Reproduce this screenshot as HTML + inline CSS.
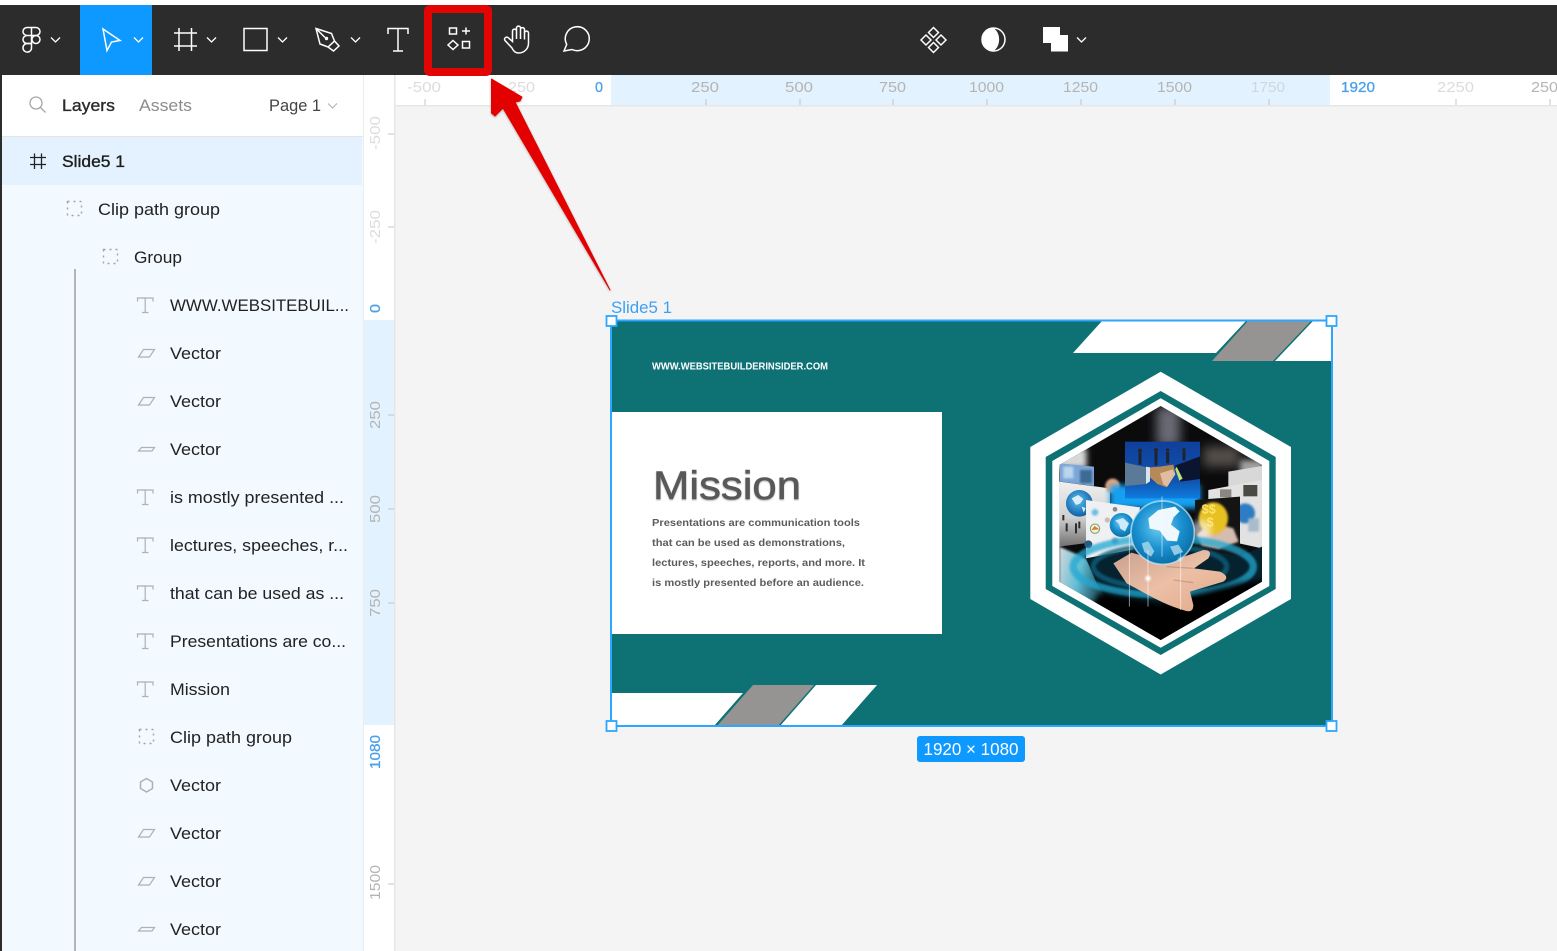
<!DOCTYPE html>
<html lang="en">
<head>
<meta charset="utf-8">
<title>Slide5 1</title>
<style>
html,body{margin:0;padding:0;background:#f4f4f4;width:1557px;height:951px;overflow:hidden}
svg{display:block}
text{font-family:"Liberation Sans",sans-serif}
.l{font-size:16.5px;fill:#222}
.r{font-size:14.5px;fill:#b4b4b4}
.rl{font-size:14.5px;fill:#dcdcdc}
.rb{font-size:14.5px;fill:#4aa0ea;stroke:#4aa0ea;stroke-width:.3}
.ic{fill:none;stroke:#fff;stroke-width:1.5}
.sic{fill:none;stroke:#b0b0b0;stroke-width:1.2}
.dash{fill:none;stroke:#a2a2a2;stroke-width:1.4;stroke-dasharray:2 4}
</style>
</head>
<body>
<svg width="1557" height="951" viewBox="0 0 1557 951" xmlns="http://www.w3.org/2000/svg">
<defs>
<clipPath id="hx"><polygon points="482,168 786,345 786,695 482,870 178,695 178,345"/></clipPath>
<radialGradient id="globe" cx="45%" cy="40%" r="60%"><stop offset="0" stop-color="#6fd0f2"/><stop offset=".6" stop-color="#1a8fd0"/><stop offset="1" stop-color="#0b6fa6"/></radialGradient>
<radialGradient id="globe2" cx="45%" cy="40%" r="60%"><stop offset="0" stop-color="#5cc0ee"/><stop offset="1" stop-color="#0f5fa8"/></radialGradient>
<linearGradient id="hand" x1="0" y1="0" x2="1" y2="1"><stop offset="0" stop-color="#c89e8e"/><stop offset=".5" stop-color="#ecc0a6"/><stop offset="1" stop-color="#e0a888"/></linearGradient>
<linearGradient id="shake" x1="0" y1="0" x2="0" y2="1"><stop offset="0" stop-color="#0f3f9a"/><stop offset=".7" stop-color="#1253b0"/><stop offset="1" stop-color="#0e7ee0"/></linearGradient>
<linearGradient id="lpanel" x1="0" y1="0" x2="0" y2="1"><stop offset="0" stop-color="#f0f0f0"/><stop offset=".55" stop-color="#d0d0d0"/><stop offset="1" stop-color="#707070"/></linearGradient>
<linearGradient id="leftbot" x1="0" y1="0" x2="1" y2=".3"><stop offset="0" stop-color="#d6dadc"/><stop offset=".45" stop-color="#5fbcd4"/><stop offset="1" stop-color="#06222c"/></linearGradient>
<filter id="b2" x="-30%" y="-30%" width="160%" height="160%"><feGaussianBlur stdDeviation="3"/></filter>
<filter id="b8" x="-40%" y="-40%" width="180%" height="180%"><feGaussianBlur stdDeviation="9"/></filter>
<filter id="b16" x="-40%" y="-40%" width="180%" height="180%"><feGaussianBlur stdDeviation="16"/></filter>
<filter id="sh" x="-20%" y="-20%" width="140%" height="140%"><feDropShadow dx="0" dy="1" stdDeviation="1" flood-color="#000" flood-opacity=".3"/></filter>
<filter id="ts" x="-5%" y="-10%" width="110%" height="130%"><feDropShadow dx="0" dy="1" stdDeviation=".8" flood-color="#000" flood-opacity=".3"/></filter>
</defs>

<!-- base -->
<rect width="1557" height="951" fill="#f4f4f4"/>
<rect width="1557" height="5" fill="#fff"/>

<!-- left panel -->
<rect x="0" y="75" width="2" height="876" fill="#2c2c2c"/>
<rect x="2" y="75" width="361" height="876" fill="#f2f9ff"/>
<rect x="2" y="75" width="361" height="61" fill="#fff"/>
<rect x="2" y="136" width="361" height="1" fill="#e5e5e5"/>
<rect x="2" y="137" width="360" height="48" fill="#e3f2fe"/>
<rect x="74" y="269" width="2" height="682" fill="#b3b6b9"/>

<!-- header -->
<circle cx="36" cy="103" r="6" fill="none" stroke="#a6a6a6" stroke-width="1.3"/>
<line x1="40.5" y1="107.500" x2="45.500" y2="112.500" stroke="#a6a6a6" stroke-width="1.3"/>
<text x="62" y="111" font-size="16.500" fill="#2a2a2a" stroke="#2a2a2a" stroke-width=".35" textLength="53" lengthAdjust="spacingAndGlyphs">Layers</text>
<text x="139" y="111" font-size="16.500" fill="#8c8c8c" textLength="53" lengthAdjust="spacingAndGlyphs">Assets</text>
<text x="269" y="111" font-size="16.500" fill="#444" textLength="52" lengthAdjust="spacingAndGlyphs">Page 1</text>
<path d="M328 103.500l4.500 4.500 4.500-4.500" fill="none" stroke="#b0b0b0" stroke-width="1.100"/>

<!-- layer rows -->
<path d="M34.500 153.500v15.500M41.500 153.500v15.500M30 157.500h16M30 164.500h16" fill="none" stroke="#222" stroke-width="1.300"/>
<text x="62" y="167" font-size="16.500" fill="#1c1c1c" stroke="#1c1c1c" stroke-width=".35" textLength="63" lengthAdjust="spacingAndGlyphs">Slide5 1</text>

<rect class="dash" x="67.500" y="201.500" width="14" height="14"/>
<text class="l" x="98" y="215" textLength="122" lengthAdjust="spacingAndGlyphs">Clip path group</text>

<rect class="dash" x="103.500" y="249.500" width="14" height="14"/>
<text class="l" x="134" y="263" textLength="48" lengthAdjust="spacingAndGlyphs">Group</text>

<path class="sic" d="M137.500 301.500v-3.500h15.500v3.500M145.200 298v14.500M142 312.500h6.500"/>
<text class="l" x="170" y="311" textLength="179" lengthAdjust="spacingAndGlyphs">WWW.WEBSITEBUIL...</text>

<polygon class="sic" points="138.500,357 143.500,349.500 154.500,349.500 149.500,357"/>
<text class="l" x="170" y="359" textLength="51" lengthAdjust="spacingAndGlyphs">Vector</text>

<polygon class="sic" points="138.500,405 143.500,397.500 154.500,397.500 149.500,405"/>
<text class="l" x="170" y="407" textLength="51" lengthAdjust="spacingAndGlyphs">Vector</text>

<polygon class="sic" points="138.500,451 141.500,447.500 154.500,447.500 152,451"/>
<text class="l" x="170" y="455" textLength="51" lengthAdjust="spacingAndGlyphs">Vector</text>

<path class="sic" d="M137.500 493.500v-3.500h15.500v3.500M145.200 490v14.500M142 504.500h6.500"/>
<text class="l" x="170" y="503" textLength="174" lengthAdjust="spacingAndGlyphs">is mostly presented ...</text>

<path class="sic" d="M137.500 541.500v-3.500h15.500v3.500M145.200 538v14.500M142 552.500h6.500"/>
<text class="l" x="170" y="551" textLength="178" lengthAdjust="spacingAndGlyphs">lectures, speeches, r...</text>

<path class="sic" d="M137.500 589.500v-3.500h15.500v3.500M145.200 586v14.500M142 600.500h6.500"/>
<text class="l" x="170" y="599" textLength="174" lengthAdjust="spacingAndGlyphs">that can be used as ...</text>

<path class="sic" d="M137.500 637.500v-3.500h15.500v3.500M145.200 634v14.500M142 648.500h6.500"/>
<text class="l" x="170" y="647" textLength="176" lengthAdjust="spacingAndGlyphs">Presentations are co...</text>

<path class="sic" d="M137.500 685.500v-3.500h15.500v3.500M145.200 682v14.500M142 696.500h6.500"/>
<text class="l" x="170" y="695" textLength="60" lengthAdjust="spacingAndGlyphs">Mission</text>

<rect class="dash" x="139.500" y="729.500" width="14" height="14"/>
<text class="l" x="170" y="743" textLength="122" lengthAdjust="spacingAndGlyphs">Clip path group</text>

<polygon points="146.500,778.500 152.500,782 152.500,788.500 146.500,792 140.500,788.500 140.500,782" fill="none" stroke="#b0b0b0" stroke-width="1.500"/>
<text class="l" x="170" y="791" textLength="51" lengthAdjust="spacingAndGlyphs">Vector</text>

<polygon class="sic" points="138.500,837 143.500,829.500 154.500,829.500 149.500,837"/>
<text class="l" x="170" y="839" textLength="51" lengthAdjust="spacingAndGlyphs">Vector</text>

<polygon class="sic" points="138.500,885 143.500,877.500 154.500,877.500 149.500,885"/>
<text class="l" x="170" y="887" textLength="51" lengthAdjust="spacingAndGlyphs">Vector</text>

<polygon class="sic" points="138.500,931 141.500,927.500 154.500,927.500 152,931"/>
<text class="l" x="170" y="935" textLength="51" lengthAdjust="spacingAndGlyphs">Vector</text>

<!-- top ruler -->
<rect x="363" y="75" width="1194" height="30" fill="#fff"/>
<rect x="611" y="75" width="719" height="30" fill="#e2f2fe"/>
<rect x="363" y="105" width="1194" height="1.500" fill="#e6e6e6"/>
<text class="rl" x="407" y="92" textLength="34" lengthAdjust="spacingAndGlyphs">-500</text>
<text class="rl" x="508" y="92" textLength="27" lengthAdjust="spacingAndGlyphs">250</text>
<text class="rb" x="595" y="92" textLength="8" lengthAdjust="spacingAndGlyphs">0</text>
<text class="r" x="691" y="92" textLength="28" lengthAdjust="spacingAndGlyphs">250</text>
<text class="r" x="785" y="92" textLength="28" lengthAdjust="spacingAndGlyphs">500</text>
<text class="r" x="879" y="92" textLength="27" lengthAdjust="spacingAndGlyphs">750</text>
<text class="r" x="969" y="92" textLength="35" lengthAdjust="spacingAndGlyphs">1000</text>
<text class="r" x="1063" y="92" textLength="35" lengthAdjust="spacingAndGlyphs">1250</text>
<text class="r" x="1157" y="92" textLength="35" lengthAdjust="spacingAndGlyphs">1500</text>
<text class="r" x="1251" y="92" style="fill:#d0d6dc" textLength="34" lengthAdjust="spacingAndGlyphs">1750</text>
<text class="rb" x="1341" y="92" textLength="34" lengthAdjust="spacingAndGlyphs">1920</text>
<text class="rl" x="1437" y="92" textLength="37" lengthAdjust="spacingAndGlyphs">2250</text>
<text class="r" x="1531" y="92" textLength="27" lengthAdjust="spacingAndGlyphs">250</text>
<path d="M425 99v6M706 99v6M800 99v6M893 99v6M987 99v6M1081 99v6M1175 99v6M1269 99v6M1456 99v6M1550 99v6" stroke="#c4c4c4" stroke-width="1" fill="none"/>

<!-- left ruler -->
<rect x="363" y="105" width="32" height="846" fill="#fff"/>
<rect x="364" y="320" width="30" height="405" fill="#e2f2fe"/>
<rect x="394" y="75" width="1.500" height="876" fill="#e6e6e6"/>
<rect x="363" y="75" width="1" height="876" fill="#ececec"/>
<text class="rl" transform="translate(380,150) rotate(-90)" textLength="34" lengthAdjust="spacingAndGlyphs">-500</text>
<text class="rl" transform="translate(380,244) rotate(-90)" textLength="34" lengthAdjust="spacingAndGlyphs">-250</text>
<text class="rb" transform="translate(380,313) rotate(-90)" textLength="9" lengthAdjust="spacingAndGlyphs">0</text>
<text class="r" transform="translate(380,429) rotate(-90)" textLength="28" lengthAdjust="spacingAndGlyphs">250</text>
<text class="r" transform="translate(380,523) rotate(-90)" textLength="28" lengthAdjust="spacingAndGlyphs">500</text>
<text class="r" transform="translate(380,617) rotate(-90)" textLength="28" lengthAdjust="spacingAndGlyphs">750</text>
<text class="rb" transform="translate(380,769) rotate(-90)" textLength="34" lengthAdjust="spacingAndGlyphs">1080</text>
<text class="r" transform="translate(380,900) rotate(-90)" textLength="35" lengthAdjust="spacingAndGlyphs">1500</text>
<path d="M388 134h6M388 227h6M388 415h6M388 509h6M388 603h6M388 884h6" stroke="#c4c4c4" stroke-width="1" fill="none"/>

<!-- toolbar -->
<rect x="0" y="5" width="1557" height="70" fill="#2c2c2c"/>
<rect x="80" y="5" width="72" height="70" fill="#0d99ff"/>
<!-- figma logo -->
<g class="ic">
<path d="M31.500 27.500h-4.500a4 4 0 0 0 0 8h4.500zM31.500 27.500h4.500a4 4 0 0 1 0 8h-4.500zM31.500 35.500h-4.500a4 4 0 0 0 0 8h4.500z"/>
<circle cx="36" cy="39.500" r="4"/>
<path d="M27 43.500h4.500v3.500a4.300 4.300 0 1 1-4.500-3.500z"/>
</g>
<path class="ic" style="stroke-width:1.300" d="M51 37.500l4.500 4.500 4.500-4.500"/>
<!-- move -->
<path class="ic" d="M103 29l17 11.500-8.500 1.500-4.500 8.500z"/>
<path class="ic" style="stroke-width:1.300" d="M134 37.500l4.500 4.500 4.500-4.500"/>
<!-- frame -->
<path class="ic" d="M179 28v23M191.500 28v23M174 33h23M174 46h23"/>
<path class="ic" style="stroke-width:1.300" d="M207 37.500l4.500 4.500 4.500-4.500"/>
<!-- rect -->
<rect class="ic" x="244" y="28.500" width="23" height="22"/>
<path class="ic" style="stroke-width:1.300" d="M278 37.500l4.500 4.500 4.500-4.500"/>
<!-- pen -->
<path class="ic" d="M316 28.500l15.500 5 3 7.500-6.500 6-8-3zM334.500 41l4.500 5-5.500 5-5.500-4M316 28.500l9 9"/>
<circle cx="326.500" cy="38.500" r="1.700" fill="#fff"/>
<path class="ic" style="stroke-width:1.300" d="M351 37.500l4.500 4.500 4.500-4.500"/>
<!-- T -->
<path class="ic" d="M388 34v-5.500h20V34M398 28.500V51M393 51h10"/>
<!-- components -->
<rect class="ic" x="449.500" y="28" width="7" height="6"/>
<path class="ic" d="M462 31h8M466 27.500v7"/>
<path class="ic" d="M453 40.500l5 4.500-5 4.500-5-4.500z"/>
<rect class="ic" x="462.500" y="41.500" width="7" height="6.500"/>
<!-- hand -->
<path class="ic" d="M512 48l-7-7.500c-1.500-2.500 1.500-4.500 3.500-2.500l4 3.500V31c0-2.500 4-2.500 4 0v8V28c0-2.500 4-2.500 4 0V39V29.500c0-2.500 4-2.500 4 0V39.500V33c0-2.500 4-2.500 4 0V43c0 6-4.500 10-10 10-3 0-5-1.500-6.500-5z"/>
<!-- comment -->
<path class="ic" d="M564 51l2.700-6.600A12 12 0 1 1 572 49.500z"/>
<!-- center tools -->
<path class="ic" d="M933.500 27.500l5 5-5 5-5-5zM926 35l5 5-5 5-5-5zM941 35l5 5-5 5-5-5zM933.500 42.500l5 5-5 5-5-5z"/>
<circle class="ic" cx="993.500" cy="39.500" r="11.500"/>
<path d="M993.500 28A11.500 11.500 0 0 0 993.500 51C1001 46 1001 33 993.500 28z" fill="#fff"/>
<path d="M1043 27h17v8h8v16.500h-17V43h-8z" fill="#fff"/>
<path class="ic" style="stroke-width:1.300" d="M1077 37.500l4.500 4.500 4.500-4.500"/>

<!-- red highlight -->
<rect x="428" y="9" width="60" height="63" rx="2" fill="none" stroke="#e30404" stroke-width="8"/>

<!-- slide -->
<rect x="611" y="320" width="721" height="406" fill="#0e7275"/>
<polygon points="1102,321 1246,321 1216,353 1073,353" fill="#fff"/>
<polygon points="1248,321 1311,321 1273,361 1212,361" fill="#959492"/>
<polygon points="1313,321 1332,321 1332,361 1275,361" fill="#fff"/>
<polygon points="612,693 743,693 714,726 612,726" fill="#fff"/>
<polygon points="753,685 814,685 778,726 717,726" fill="#959492"/>
<polygon points="816,685 877,685 841,726 780,726" fill="#fff"/>
<rect x="612" y="412" width="330" height="222" fill="#fff"/>

<text x="652" y="369.500" font-size="10" font-weight="bold" fill="#fff" textLength="176" lengthAdjust="spacingAndGlyphs">WWW.WEBSITEBUILDERINSIDER.COM</text>
<text x="653" y="499" font-size="40" fill="#595959" stroke="#595959" stroke-width=".6" filter="url(#ts)" textLength="148" lengthAdjust="spacingAndGlyphs">Mission</text>
<g font-size="10.500" font-weight="bold" fill="#5c5c5c">
<text x="652" y="526" textLength="208" lengthAdjust="spacingAndGlyphs">Presentations are communication tools</text>
<text x="652" y="546" textLength="193" lengthAdjust="spacingAndGlyphs">that can be used as demonstrations,</text>
<text x="652" y="566" textLength="213" lengthAdjust="spacingAndGlyphs">lectures, speeches, reports, and more. It</text>
<text x="652" y="586" textLength="212" lengthAdjust="spacingAndGlyphs">is mostly presented before an audience.</text>
</g>

<!-- hexagons -->
<polygon points="1160.700,371.700 1291,447 1291,599 1160.700,674.500 1030.300,599 1030.300,447" fill="#fff"/>
<polygon points="1160.700,391 1275.700,457 1275.700,589 1160.700,655 1045.700,589 1045.700,457" fill="#0e7275"/>
<polygon points="1160.700,398.300 1269.300,461 1269.300,586 1160.700,647.700 1052.300,586 1052.300,461" fill="#fff"/>

<!-- picture -->
<g transform="translate(1000,350) scale(.33333)">
<g clip-path="url(#hx)">
<rect x="170" y="160" width="630" height="720" fill="#0b0b0c"/>
<rect x="470" y="170" width="70" height="120" fill="#6b6a76" filter="url(#b16)"/>
<rect x="610" y="290" width="110" height="60" fill="#55504c" filter="url(#b16)"/>
<rect x="170" y="295" width="90" height="60" fill="#d8d8d8" filter="url(#b8)"/>
<rect x="720" y="330" width="70" height="50" fill="#a0a0a0" filter="url(#b8)"/>

<!-- left panel -->
<polygon points="178,395 330,415 330,570 178,590" fill="url(#lpanel)"/>
<polygon points="180,340 282,350 282,408 180,395" fill="#7da6d8"/>
<rect x="190" y="350" width="30" height="35" fill="#b9d6ee" filter="url(#b2)"/>
<rect x="240" y="360" width="36" height="40" fill="#3c6a92" filter="url(#b2)"/>
<circle cx="238" cy="460" r="40" fill="url(#globe2)"/>
<path d="M215 445l20-10 15 12-10 14-12 4zM245 470l12 4-6 14z" fill="#d9eefc"/>
<path d="M190 495v16M200 520v24M228 520v30M238 515v20" stroke="#2c2c2c" stroke-width="6"/>
<circle cx="338" cy="408" r="22" fill="#e8a77e" filter="url(#b2)"/>

<!-- blue glow + handshake -->
<path d="M330 405h270v70H330z" fill="#12a0f2" filter="url(#b8)"/>
<rect x="375" y="275" width="225" height="170" fill="url(#shake)"/>
<path d="M375 338l65 14v50l-65 6z" fill="#5a7a98"/>
<path d="M525 347l75-28v68l-58 8z" fill="#0b1530"/>
<path d="M530 350l18 36-10 6-12-34z" fill="#b9e27a"/>
<path d="M438 350l12 2v42l-12 8z" fill="#d8e4f0"/>
<path d="M450 352l30-2 40-6 6 30-26 38-28-10-22-20z" fill="#b68a58"/>
<path d="M480 370l38-12 8 14-24 38-12-6z" fill="#e0bca0"/>
<path d="M420 308v36M468 306v40M503 306v34M552 305v27" stroke="#1c2430" stroke-width="9"/>
<circle cx="420" cy="302" r="6" fill="#2b2320"/><circle cx="468" cy="300" r="6" fill="#2b2320"/><circle cx="503" cy="300" r="5" fill="#2b2320"/><circle cx="552" cy="299" r="5" fill="#2b2320"/>

<!-- center left panel -->
<polygon points="258,450 420,472 400,598 258,625" fill="#eef0f2"/>
<circle cx="365" cy="525" r="36" fill="url(#globe)"/>
<path d="M345 512l24-8 18 16-12 24-14-8-4-14z" fill="#cdeafa"/>
<circle cx="285" cy="487" r="10" fill="#6dbbe6" filter="url(#b2)"/>
<circle cx="322" cy="510" r="8" fill="#c9bfb3"/>
<circle cx="345" cy="478" r="7" fill="#8a8a8a"/>
<circle cx="285" cy="536" r="14" fill="#f1f1e0" stroke="#7aa060" stroke-width="3"/>
<path d="M274 540l10-12 14 10z" fill="#d87a30"/>
<circle cx="265" cy="583" r="12" fill="#2a5a80"/>
<circle cx="345" cy="573" r="10" fill="#6e9ac0" filter="url(#b2)"/>

<!-- right panels -->
<polygon points="685,365 786,348 786,400 685,412" fill="#d8d8d8"/>
<polygon points="625,420 786,390 786,595 625,560" fill="#e2e2e2"/>
<rect x="730" y="405" width="42" height="34" fill="#4a4a44"/>
<rect x="660" y="418" width="34" height="24" fill="#8a8680"/>
<circle cx="735" cy="490" r="30" fill="#2e7dc4" filter="url(#b2)"/>
<rect x="745" y="505" width="32" height="40" fill="#a8bccb" filter="url(#b2)"/>
<polygon points="585,450 720,440 720,618 585,595" fill="#141414"/>
<path d="M590 555l40-40 70 20 16 40-60 22-50-10z" fill="#d6bcae" filter="url(#b2)"/>
<ellipse cx="640" cy="505" rx="44" ry="48" fill="#e7c020" filter="url(#b2)"/>
<g font-size="38" font-weight="bold" fill="#fbe36a"><text x="605" y="490">$$</text><text x="620" y="530">$</text></g>
<circle cx="605" cy="540" r="30" fill="#fff" opacity=".55" filter="url(#b8)"/>

<!-- lower ripple -->
<polygon points="178,590 258,625 300,690 345,790 178,710" fill="url(#leftbot)" filter="url(#b2)"/>
<path d="M258 625L400 600 590 595 720 618 786 590V720L480 880 340 780 290 700z" fill="#06222e"/>
<ellipse cx="490" cy="650" rx="270" ry="85" fill="none" stroke="#22a8d0" stroke-width="22" opacity=".75" filter="url(#b2)"/>
<ellipse cx="480" cy="650" rx="200" ry="62" fill="none" stroke="#0e5f7a" stroke-width="16" opacity=".8" filter="url(#b2)"/>
<polygon points="300,730 480,760 720,700 800,690 800,880 200,880" fill="#020303" filter="url(#b8)"/>

<!-- hand -->
<path d="M340 640L395 608 500 638 610 600Q640 600 625 625L582 655 660 665Q692 680 670 695L570 725 580 765Q580 790 555 782C480 760 420 720 380 700z" fill="url(#hand)"/>
<path d="M500 650l80 5M520 690l60 8" stroke="#b58470" stroke-width="4" fill="none" opacity=".55"/>

<!-- globe -->
<circle cx="488" cy="548" r="95" fill="url(#globe)"/>
<circle cx="488" cy="548" r="95" fill="none" stroke="#bfeaf9" stroke-width="5" opacity=".7"/>
<path d="M445 505l30-25 50-10 14 14-18 18-8 22 26 20-8 30-30-2-22-30-30-6z" fill="#eef8fd"/>
<path d="M425 580l20-6 18 30-10 16-20-14zM510 590l25-6 14 22-26 10z" fill="#8fcbe6"/>
<path d="M388 560v210M444 600v170M486 440v180M542 610v170" stroke="#fff" stroke-width="2.500" opacity=".65"/>
<circle cx="444" cy="685" r="8" fill="#fff" filter="url(#b2)"/>
<circle cx="540" cy="628" r="5" fill="#bff" filter="url(#b2)"/>
</g>
</g>

<!-- arrow -->
<polygon points="491.500,79 522,97 520,101 515,102 610,290 503,108 495,116 491.500,113" fill="#e30404" stroke="#e30404" stroke-width="1" stroke-linejoin="round" filter="url(#sh)"/>

<!-- selection -->
<rect x="611" y="320.500" width="721" height="405.500" fill="none" stroke="#2da6ff" stroke-width="2"/>
<g fill="#fff" stroke="#2da6ff" stroke-width="1.800">
<rect x="606.500" y="316" width="10" height="10"/>
<rect x="1326.500" y="316" width="10" height="10"/>
<rect x="606.500" y="721" width="10" height="10"/>
<rect x="1326.500" y="721" width="10" height="10"/>
</g>
<text x="611" y="313" font-size="17" fill="#3fa0f2" textLength="61" lengthAdjust="spacingAndGlyphs">Slide5 1</text>
<rect x="917" y="736" width="108" height="26" rx="3" fill="#0d99ff"/>
<text x="923.500" y="755" font-size="17.500" fill="#fff" textLength="95" lengthAdjust="spacingAndGlyphs">1920 × 1080</text>
</svg>
</body>
</html>
